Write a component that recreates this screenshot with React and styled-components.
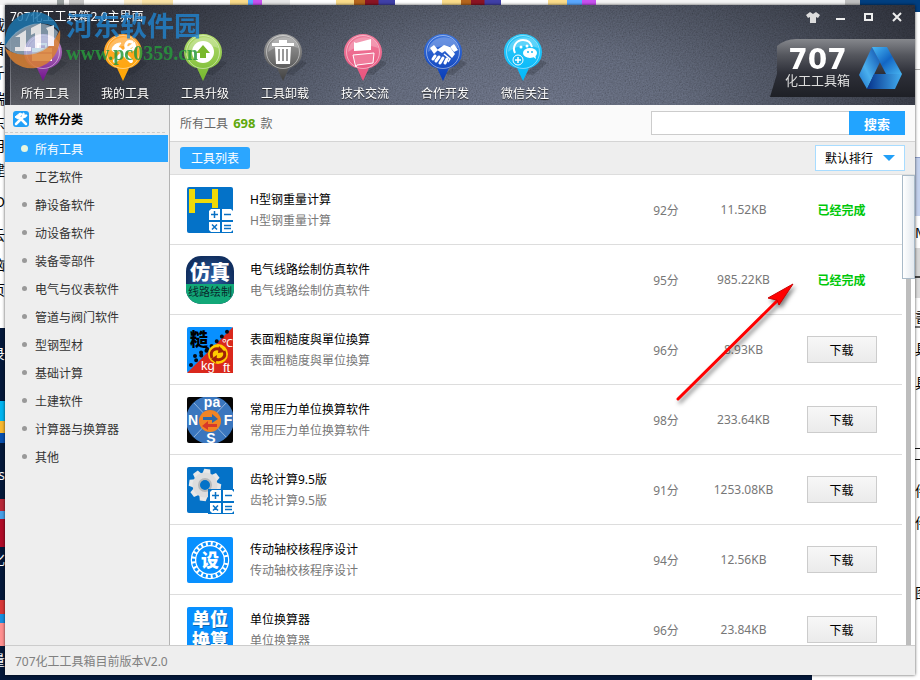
import React, { useState } from "react";
import styled, { createGlobalStyle } from "styled-components";

const GlobalStyle = createGlobalStyle`
  * { box-sizing: border-box; }
  body { margin: 0; }
  body, button, input, select {
    font-family: "Noto Sans", "Noto Sans CJK SC", sans-serif;
    font-size: 12px;
  }
  button { padding: 0; border: 0; background: none; cursor: pointer; }
  ul { margin: 0; padding: 0; list-style: none; }
`;

/* ---------- desktop behind the window ---------- */

const Desktop = styled.div`
  position: relative;
  display: grid;
  height: 100vh;
  padding: 5px;
  overflow: hidden;
  background:
    linear-gradient(90deg,
      #f4f4f4 0 57px, #9aa0a0 57px 64px, #f8f8f8 64px 69px, #c6c6c6 69px 84px, #fff 84px 124px,
      #fdeeca 124px 142px, #fbe3a6 142px 173px, #fff 173px 230px, #fbdc8a 230px 248px, #5aa8ff 248px 253px,
      #c850f0 253px 262px, #e6e6e6 262px 290px, #fff 290px 336px, #fbdc8a 336px 354px, #b5651d 354px 365px,
      #8c1424 365px 378px, #4040a8 379px 395px, #fff 395px 442px, #fbdc8a 442px 461px, #b5651d 461px 471px,
      #8c1424 471px 484px, #4040a8 485px 501px, #fff 501px 548px, #fbdc8a 548px 567px, #5aa8ff 567px 582px,
      #c850f0 582px 596px, #f4f4f4 596px 845px, #c0c0c0 845px 860px, #003f80 860px) 0 0 / 100% 5px no-repeat,
    linear-gradient(#fff 0 328px, #04183a 328px 401px, #00b4f0 401px 421px, #f8b830 421px 433px, #0850b0 433px 443px,
      #04183a 443px 499px, #b82838 499px 511px, #48a0e8 511px 519px, #b00c28 519px 547px, #04183a 547px 600px,
      #d83838 600px 614px, #1890e0 614px 623px, #ff9090 623px 646px, #04183a 646px) 0 0 / 5px 100% no-repeat,
    linear-gradient(#003f80 0 12px, #fff 12px 69px, #aaa 69px 70px, #fff 70px 157px, #8c9cc8 157px 158px, #c4d2ee 158px 216px,
      #fff 216px 248px, #d8d8d8 248px 276px, #444 276px 278px, #ddd 278px 298px, #fff 298px 326px,
      #777 326px 328px, #fff 328px 448px, #111 448px 449px, #fff 449px 459px, #111 459px 460px, #fff 460px) 100% 0 / 5px 100% no-repeat,
    linear-gradient(90deg, #04183a 0 812px, #fff 812px) 0 100% / 100% 5px no-repeat;
`;

const EdgeText = styled.span`
  position: absolute;
  top: ${(p) => p.$top}px;
  ${(p) => (p.$side === "left" ? "left: 0; justify-content: flex-end;" : "right: 0;")}
  display: flex;
  width: 5px;
  overflow: hidden;
  color: ${(p) => (p.$light ? "#fff" : "#000")};
  font-size: 14px;
  line-height: 18px;
`;

/* ---------- window ---------- */

const Window = styled.div`
  position: relative;
  display: flex;
  flex-direction: column;
  min-width: 0;
  min-height: 0;
  background: #eee;
  box-shadow: 0 0 3px rgba(0, 0, 0, 0.7);
`;

const Header = styled.header`
  position: relative;
  isolation: isolate;
  display: flex;
  justify-content: space-between;
  height: 100px;
  flex: none;
  color: #fff;
  background: radial-gradient(ellipse 52% 210% at 57% 110%, #5f6576 0%, #545a69 35%, #363a44 75%, #25272f 100%);
`;

const Grain = styled.svg`
  position: absolute;
  inset: 0;
  z-index: -1;
  width: 100%;
  height: 100%;
  opacity: 0.3;
  mix-blend-mode: overlay;
`;

const HeaderStart = styled.div`
  display: flex;
  flex-direction: column;
  justify-content: space-between;
`;

const WindowTitle = styled.h1`
  margin: 0;
  padding: 4px 0 0 5px;
  font-size: 12px;
  font-weight: 400;
  line-height: 16px;
`;

const MainNav = styled.nav`
  display: flex;
  gap: 10px;
  padding-left: 5px;
`;

const NavButton = styled.button`
  display: flex;
  flex-direction: column;
  align-items: center;
  gap: 2px;
  width: 70px;
  height: 80px;
  padding-top: 8px;
  border: solid transparent;
  border-width: 0 1px;
  color: #fff;
  line-height: 18px;
  text-shadow: 0 1px 1px #222;
  ${(p) =>
    p.$active &&
    `background: linear-gradient(rgba(255,255,255,0), rgba(255,255,255,.22));
     border-image: linear-gradient(transparent, #8a8c94) 1;
     border-width: 0 1px;`}
`;

const HeaderEnd = styled.div`
  display: flex;
  flex-direction: column;
  align-items: flex-end;
  justify-content: space-between;
  padding-bottom: 8px;
`;

const WindowControls = styled.div`
  display: flex;
  gap: 12px;
  padding: 4px 10px 0 0;
`;

const ControlButton = styled.button`
  display: grid;
  place-items: center;
  width: 16px;
  height: 16px;
  color: #eee;
`;

const Brand = styled.div`
  display: flex;
  align-items: center;
  gap: 8px;
  height: 58px;
  padding: 0 13px 0 15px;
  border-top-left-radius: 26px 22px;
  background: linear-gradient(#85878c 0, #55575e 16px, #2e3039 34px, #1e2026 58px);
  clip-path: polygon(7px 0, 100% 0, 100% 100%, 0 100%, 7px 60%);
`;

const BrandText = styled.div`
  text-align: center;
  font-size: 13px;
  line-height: 16px;
  color: #ddd;
`;

const BrandNumber = styled.strong`
  display: block;
  font: bold 28px/24px "DejaVu Sans", sans-serif;
  color: #fff;
`;

/* ---------- watermark over the header ---------- */

const Watermark = styled.div`
  position: absolute;
  top: 8px;
  left: 4px;
  display: flex;
  align-items: center;
  gap: 3px;
  pointer-events: none;
`;

const WatermarkName = styled.div`
  color: #2084d0;
  opacity: 0.8;
  font: bold 27px/28px "Noto Sans CJK SC", sans-serif;
`;

const WatermarkUrl = styled.div`
  color: #28983c;
  opacity: 0.85;
  font: bold 20px/28px "Liberation Serif", serif;
`;

/* ---------- body ---------- */

const Body = styled.div`
  display: flex;
  flex: 1;
  min-height: 0;
`;

const Sidebar = styled.aside`
  width: 165px;
  flex: none;
  border-right: 1px solid #b4b4b4;
  background: #eee;
`;

const SidebarTitle = styled.h2`
  display: flex;
  align-items: center;
  gap: 6px;
  height: 28px;
  margin: 0 4px 2px 0;
  padding-left: 8px;
  border-bottom: 1px dashed #ccc;
  font-size: 12px;
  color: #000;
`;

const CategoryButton = styled.button`
  display: flex;
  align-items: center;
  gap: 7px;
  width: 163px;
  height: 27px;
  margin-bottom: 1px;
  padding-left: 16px;
  color: ${(p) => (p.$active ? "#fff" : "#333")};
  background: ${(p) => (p.$active ? "#2ba6ff" : "transparent")};

  &::before {
    content: "";
    width: ${(p) => (p.$active ? 7 : 5)}px;
    height: ${(p) => (p.$active ? 7 : 5)}px;
    margin: 0 ${(p) => (p.$active ? 0 : 1)}px;
    border-radius: 50%;
    background: ${(p) => (p.$active ? "#e6f5df" : "#999")};
  }
`;

const Content = styled.main`
  display: flex;
  flex: 1;
  flex-direction: column;
  min-width: 0;
  background: #fff;
`;

const SearchBar = styled.div`
  display: flex;
  align-items: center;
  justify-content: space-between;
  flex: none;
  height: 37px;
  padding: 0 10px;
  border-bottom: 1px solid #d4d4d4;
  background: #fafafa;
  color: #666;
`;

const Count = styled.strong`
  margin: 0 2px;
  font-size: 13px;
  color: #60a80c;
`;

const SearchForm = styled.form`
  display: flex;
`;

const SearchInput = styled.input`
  width: 198px;
  height: 24px;
  padding: 0 6px;
  border: 1px solid #ccc;
  border-right: 0;
  background: #fff;
`;

const SearchButton = styled.button`
  width: 56px;
  height: 24px;
  background: #22a4ff;
  color: #fff;
  font-size: 13px;
  font-weight: 700;
`;

const ListToolbar = styled.div`
  display: flex;
  align-items: center;
  justify-content: space-between;
  flex: none;
  height: 33px;
  padding: 0 10px;
  border-bottom: 1px solid #ddd;
  background: #eee;
`;

const ListTab = styled.button`
  width: 70px;
  height: 22px;
  border-radius: 3px;
  background: #2ba6ff;
  color: #fff;
`;

const SortBox = styled.label`
  display: flex;
  align-items: center;
  width: 90px;
  height: 26px;
  padding: 0 9px;
  border: 1px solid #a8dcff;
  background: #fff;
`;

const SortSelect = styled.select`
  flex: 1;
  min-width: 0;
  padding: 0;
  border: 0;
  appearance: none;
  background: transparent;
  color: #000;
`;

const ListArea = styled.div`
  display: flex;
  flex: 1;
  min-height: 0;
`;

const ToolList = styled.ul`
  flex: 1;
  min-width: 0;
  overflow: hidden;
`;

const ToolRow = styled.li`
  display: grid;
  grid-template-columns: 46px minmax(0, 1fr) 80px 75px 121px;
  align-items: center;
  height: 70px;
  padding-left: 17px;
  border-bottom: 1px solid #ddd;
  color: #777;
  text-align: center;
`;

const ToolText = styled.div`
  padding-left: 17px;
  text-align: left;
  line-height: 21px;
`;

const ToolName = styled.div`
  color: #000;
`;

const Tile = styled.svg`
  display: block;
  width: 46px;
  height: 46px;
  overflow: visible;
`;

const TileCaption = styled.g`
  text-shadow: 1px 1px 0 #0868b4;
`;

const Done = styled.strong`
  color: #00c80a;
`;

const DownloadButton = styled.button`
  width: 70px;
  height: 27px;
  border: 1px solid #ccc;
  background: linear-gradient(#f7f7f7, #ebebeb);
  color: #000;
`;

const ScrollTrack = styled.div`
  display: flex;
  align-items: flex-start;
  width: 13px;
  flex: none;
  background: linear-gradient(#bdbdbd, #bdbdbd) 4px 0 / 5px 100% no-repeat #fff;
`;

const ScrollThumb = styled.div`
  width: 13px;
  height: 104px;
  border: 1px solid #a9bac8;
  background: linear-gradient(90deg, #fff, #e2e8ee);
`;

const StatusBar = styled.footer`
  display: flex;
  align-items: center;
  height: 30px;
  flex: none;
  padding: 0 10px;
  border-top: 1px solid #ccc;
  background: #eee;
  color: #808080;
`;

const ArrowOverlay = styled.svg`
  position: absolute;
  top: 275px;
  right: 115px;
  width: 130px;
  height: 130px;
  pointer-events: none;
  filter: drop-shadow(2px 3px 2px rgba(0, 0, 0, 0.5));
`;

/* ---------- drawings ---------- */

const pinGlyphs = {
  bag: (
    <g fill="#fff">
      <path d="M9 14h20v13H9z" />
      <path d="M15 14v-4h8v4" fill="none" stroke="#fff" strokeWidth="2" />
      <path d="M9 19h20" stroke="#8d4c9d" />
    </g>
  ),
  tools: (
    <g fill="none" stroke="#fff" strokeLinecap="round">
      <path d="M12 27 25 14" strokeWidth="4" />
      <path d="M29 8c-5-2-8 3-5 7 4 3 9 0 7-5l-4 3" strokeWidth="3" />
      <path d="m16 15 12 12" strokeWidth="4" />
      <path d="M9 16c0-4 4-7 9-7l-3 4 1 3-4 2z" fill="#fff" strokeWidth="1" />
    </g>
  ),
  up: (
    <g>
      <circle cx="20" cy="18" r="11" fill="#fff" />
      <path d="m20 11 7 8h-4v5h-6v-5h-4z" fill="#79b82c" />
    </g>
  ),
  trash: (
    <g fill="#fff">
      <path d="M9 9h7V6h8v3h7v3H9zM12 13h16l-1 17H13z" />
      <path d="M16 15v12M20 15v12M24 15v12" stroke="#777" strokeWidth="1.500" />
    </g>
  ),
  chat: (
    <g>
      <path d="m11 8 2 1 15-4v11l-17 1z" fill="#fff" />
      <path d="m10 21 21-2-1 10-16 2-1 2-1-3z" fill="#f07c9c" stroke="#fff" />
    </g>
  ),
  hands: (
    <g fill="#fff">
      <path d="m7 14 4-3 4 5-4 4zM27 13l4-3 4 6-4 2z" />
      <path d="m14 16 7-5 6 2 5 7-3 4-7-7-3 2z" />
      <path d="m12 22-2 3m6-2-3 4m7-3-3 5m7-4-2 4" stroke="#fff" strokeWidth="3" strokeLinecap="round" />
      <path d="m21 20 6 5-2 3" fill="none" stroke="#fff" strokeWidth="1.500" />
    </g>
  ),
  wechat: (
    <g>
      <path d="M12 19c-3-6 1-13 8-13 5 0 8 3 9 7" fill="none" stroke="#fff" strokeWidth="2" />
      <circle cx="18" cy="13" r="1.500" fill="#fff" />
      <circle cx="24" cy="12" r="1.500" fill="#fff" />
      <ellipse cx="27" cy="19" rx="7" ry="5" fill="#fff" />
      <path d="m29 22 4 3-1-5z" fill="#fff" />
      <circle cx="25" cy="18" r="1" fill="#18b9f2" />
      <circle cx="29" cy="18" r="1" fill="#18b9f2" />
      <circle cx="15" cy="26" r="5" fill="#18b9f2" stroke="#fff" />
      <path d="M12 26h6M15 23v6" stroke="#fff" strokeWidth="1.500" />
    </g>
  ),
};

function Pin({ id, dark, light, glyph }) {
  return (
    <svg width="44" height="50" viewBox="0 0 44 50" aria-hidden="true">
      <defs>
        <linearGradient id={`pin-${id}`} x1="0" y1="0" x2="0" y2="1">
          <stop offset="0" stopColor={light} />
          <stop offset="1" stopColor={dark} />
        </linearGradient>
      </defs>
      <path d="m22 41 16-14 6 3-14 12z" fill="#20222b" opacity=".25" />
      <path d="M20 1c10.500 0 19 8 19 18 0 9-6 15-13 16l-6 13-6-13C7 34 1 28 1 19 1 9 9.500 1 20 1z" fill={`url(#pin-${id})`} />
      <circle cx="20" cy="19" r="16.500" fill="none" stroke="#fff" strokeOpacity=".45" />
      <path d="M5 19C6 0 34 0 35 15 25 11 14 12 5 19z" fill="#fff" opacity=".25" />
      <g transform="translate(0 1)">{pinGlyphs[glyph]}</g>
    </svg>
  );
}

function BrandMark() {
  return (
    <svg width="44" height="44" viewBox="0 0 44 44" aria-hidden="true">
      <defs>
        <linearGradient id="bm-a" x1="1" y1="0" x2="0" y2="1">
          <stop offset="0" stopColor="#0a48a8" />
          <stop offset=".6" stopColor="#4ab0ee" />
          <stop offset="1" stopColor="#1a70c8" />
        </linearGradient>
        <linearGradient id="bm-b" x1="0" y1="0" x2="1" y2="1">
          <stop offset="0" stopColor="#49b8f4" />
          <stop offset=".5" stopColor="#1266c4" />
          <stop offset="1" stopColor="#48b4f0" />
        </linearGradient>
        <linearGradient id="bm-c">
          <stop offset="0" stopColor="#06338c" />
          <stop offset="1" stopColor="#43aef0" />
        </linearGradient>
      </defs>
      <path d="M14 1 22 16 9 43 1 29z" fill="url(#bm-a)" />
      <path d="M14 1h15l15 27H28z" fill="url(#bm-b)" />
      <path d="M16 28h28l-7 15H9z" fill="url(#bm-c)" />
    </svg>
  );
}

function WatermarkMark() {
  return (
    <svg width="59" height="62" viewBox="0 0 59 62" opacity=".85" aria-hidden="true">
      <path d="M1 38C-2 0 48-8 56 24 44 8 15 16 1 38z" fill="#1c75ad" />
      <path d="M1 40c16 13 44 6 55-18 4 44-46 50-55 18z" fill="#d98032" />
      <path d="M1 38c13-24 40-29 53-14-6 21-31 28-48 19z" fill="#a9c8dd" opacity=".75" />
      <path d="m11 29 11-7v17h5V20l10-5v25h-6V25l-4 2v16H11v-4h5V29zM42 20l8-3v21h-6V23z" fill="#fff" />
    </svg>
  );
}

const gearTeeth = [0, 45, 90, 135, 180, 225, 270, 315];

function Calculator() {
  return (
    <g>
      <rect x="20" y="21" width="26" height="25" fill="#0472c8" />
      <path d="M24 22h9v11H22v-9zM35 22h9l2 2v9H35zM22 35h11v10h-9l-2-2zM35 35h11v8l-2 2h-9z" fill="#fff" />
      <path
        d="M24 27.500h7M27.500 24v7M37 27.500h7M25 37.500l5 5m0-5-5 5M37 38.500h7M37 41.500h7"
        stroke="#0870c4"
        strokeWidth="1.500"
      />
    </g>
  );
}

const cjkBold = { fontFamily: '"Noto Sans CJK SC", sans-serif', fontWeight: 800 };
const latinBold = { fontFamily: '"Liberation Sans", sans-serif', fontWeight: 700 };

const tiles = {
  steel: (
    <>
      <rect width="46" height="46" rx="2" fill="#0472c8" />
      <path d="M2 2h6v10h17V2h6v19h-6v-5H8v10H2z" fill="#f0da08" />
      <Calculator />
    </>
  ),
  circuit: (
    <>
      <defs>
        <clipPath id="squircle"><rect x="-1" y="-1" width="48" height="48" rx="15" /></clipPath>
        <radialGradient id="navy"><stop stopColor="#2e64ac" /><stop offset="1" stopColor="#112f60" /></radialGradient>
      </defs>
      <g clipPath="url(#squircle)">
        <path d="M-1-1h48v48H-1z" fill="url(#navy)" />
        <path d="M-1 27h48v20H-1z" fill="#12a878" />
      </g>
      <text x="23" y="23" textAnchor="middle" fontSize="20" fill="#fff" {...cjkBold}>仿真</text>
      <text x="23" y="39" textAnchor="middle" fontSize="11" fill="#082a2c" fontFamily="Noto Sans CJK SC">线路绘制</text>
    </>
  ),
  rough: (
    <>
      <rect width="46" height="46" rx="2" fill="#0890ff" />
      <path d="M46 0v46H0z" fill="#da281c" />
      <path d="M4 38 43 2" stroke="#050a14" strokeWidth="4" strokeLinecap="round" strokeDasharray="0 7" />
      <path d="M8 29 22 21" stroke="#050a14" strokeWidth="4" strokeLinecap="round" strokeDasharray="0 7" />
      <text x="3" y="19" fontSize="18" fill="#000" {...cjkBold}>糙</text>
      <circle cx="31" cy="27" r="10" fill="#fc0" />
      <path d="M25 31c-3-8 4-11 9-8M37 24c3 7-4 10-9 8" fill="none" stroke="#a02008" strokeWidth="3" />
      <path d="m32 19 6 6-7 1zM30 28l-1 8-5-4z" fill="#a02008" />
      <g fill="#fff" fontFamily="Liberation Sans" fontSize="13">
        <text x="35" y="20" fontSize="11">℃</text>
        <text x="14" y="43">kg</text>
        <text x="36" y="45">ft</text>
      </g>
    </>
  ),
  pressure: (
    <>
      <defs>
        <clipPath id="dial"><rect width="46" height="46" rx="2" /></clipPath>
      </defs>
      <g clipPath="url(#dial)">
        <path d="M0 0h46v46H0z" fill="#050505" />
        <circle cx="23" cy="23" r="24" fill="#3a76be" />
        <path d="m7 6 32 34M39 6 7 40" stroke="#90b4dc" />
      </g>
      <circle cx="23" cy="24" r="11" fill="#f08424" />
      <path d="M16 20h9v-3l6 5-6 4v-3h-9z" fill="#2c68a8" />
      <path d="M30 27h-9v-3l-6 5 6 4v-3h9z" fill="#d83828" />
      <g fill="#fff" fontSize="14" textAnchor="middle" {...latinBold}>
        <text x="25" y="10">pa</text>
        <text x="6" y="28">N</text>
        <text x="41" y="28">F</text>
        <text x="24" y="46">S</text>
      </g>
    </>
  ),
  gear: (
    <>
      <rect width="46" height="46" rx="2" fill="#0472c8" />
      {gearTeeth.map((a) => (
        <path key={a} d="M15 2h6l2 9H13z" fill="#e8e8e8" transform={`rotate(${a + 8} 18 18)`} />
      ))}
      <circle cx="18" cy="18" r="9" fill="none" stroke="#ddd" strokeWidth="7" />
      <circle cx="18" cy="18" r="6" fill="none" stroke="#b5b8ba" strokeWidth="2" />
      <g transform="translate(1 1)"><Calculator /></g>
    </>
  ),
  shaft: (
    <>
      <rect width="46" height="46" rx="2" fill="#0890ff" />
      <circle cx="23" cy="23" r="16.500" fill="none" stroke="#fff" strokeWidth="5.500" />
      <circle cx="23" cy="23" r="16.500" fill="none" stroke="#0890ff" strokeWidth="3" strokeDasharray="3 2" />
      <text x="23" y="30" textAnchor="middle" fontSize="18" fill="#fff" {...cjkBold}>设</text>
    </>
  ),
  units: (
    <>
      <rect width="46" height="46" rx="2" fill="#0890ff" />
      <TileCaption fill="#fff" fontSize="18" textAnchor="middle" {...cjkBold}>
        <text x="23" y="19">单位</text>
        <text x="23" y="40">换算</text>
      </TileCaption>
    </>
  ),
};

/* ---------- data ---------- */

const navItems = [
  { label: "所有工具", glyph: "bag", light: "#c79bd0", dark: "#71108c" },
  { label: "我的工具", glyph: "tools", light: "#ffa535", dark: "#ffa800" },
  { label: "工具升级", glyph: "up", light: "#b4dc70", dark: "#74b82c" },
  { label: "工具卸载", glyph: "trash", light: "#a4a4a4", dark: "#404040" },
  { label: "技术交流", glyph: "chat", light: "#f07c9c", dark: "#e8527c" },
  { label: "合作开发", glyph: "hands", light: "#3c74dc", dark: "#083cb8" },
  { label: "微信关注", glyph: "wechat", light: "#30c8f8", dark: "#00b8fa" },
];

const categories = [
  "所有工具", "工艺软件", "静设备软件", "动设备软件", "装备零部件", "电气与仪表软件",
  "管道与阀门软件", "型钢型材", "基础计算", "土建软件", "计算器与换算器", "其他",
];

const tools = [
  { name: "H型钢重量计算", score: "92分", size: "11.52KB", tile: "steel", done: true },
  { name: "电气线路绘制仿真软件", score: "95分", size: "985.22KB", tile: "circuit", done: true },
  { name: "表面粗糙度與單位換算", score: "96分", size: "8.93KB", tile: "rough" },
  { name: "常用压力单位换算软件", score: "98分", size: "233.64KB", tile: "pressure" },
  { name: "齿轮计算9.5版", score: "91分", size: "1253.08KB", tile: "gear" },
  { name: "传动轴校核程序设计", score: "94分", size: "12.56KB", tile: "shaft" },
  { name: "单位换算器", score: "96分", size: "23.84KB", tile: "units" },
];

const edgeTexts = [
  ["left", 16, "载"], ["left", 40, "首"], ["left", 64, "斤"], ["left", 90, "端"], ["left", 114, "东"],
  ["left", 137, "用"], ["left", 161, "建"], ["left", 193, "D"], ["left", 226, "云"], ["left", 256, "脑"],
  ["left", 281, "页"], ["left", 345, "录", true], ["left", 466, "s", true], ["left", 550, "化", true],
  ["left", 651, "量", true],
  ["right", 224, "M"], ["right", 308, "書"], ["right", 340, "具"], ["right", 374, "具"],
  ["right", 482, "件"], ["right", 514, "件"], ["right", 584, "图"],
];

export default function App() {
  const [section, setSection] = useState(navItems[0].label);
  const [category, setCategory] = useState(categories[0]);

  return (
    <Desktop>
      <GlobalStyle />
      {edgeTexts.map(([side, top, text, light]) => (
        <EdgeText key={side + top} $side={side} $top={top} $light={light} aria-hidden="true">
          <span>{text}</span>
        </EdgeText>
      ))}
      <Window>
        <Header>
          <Grain aria-hidden="true">
            <filter id="grain">
              <feTurbulence type="fractalNoise" baseFrequency="0.7" numOctaves="2" />
              <feColorMatrix values="1 0 0 0 0  1 0 0 0 0  1 0 0 0 0  0 0 0 0 1" />
            </filter>
            <rect width="100%" height="100%" filter="url(#grain)" />
          </Grain>
          <HeaderStart>
            <WindowTitle>707化工工具箱2.0主界面</WindowTitle>
            <MainNav>
              {navItems.map((item) => (
                <NavButton key={item.label} $active={item.label === section} onClick={() => setSection(item.label)}>
                  <Pin id={item.glyph} {...item} />
                  {item.label}
                </NavButton>
              ))}
            </MainNav>
          </HeaderStart>
          <HeaderEnd>
            <WindowControls>
              <ControlButton aria-label="皮肤">
                <svg width="14" height="12" viewBox="0 0 14 12" fill="#ddd"><path d="m4 1 3 2 3-2 4 3-2 3-2-1v6H4V6L2 7 0 4z" /></svg>
              </ControlButton>
              <ControlButton aria-label="最小化">
                <svg width="10" height="10" viewBox="0 0 10 10" fill="currentColor"><path d="M0 6h9v2H0z" /></svg>
              </ControlButton>
              <ControlButton aria-label="最大化">
                <svg width="10" height="10" viewBox="0 0 10 10" fill="none" stroke="currentColor" strokeWidth="2"><path d="M1 2h7v6H1z" /></svg>
              </ControlButton>
              <ControlButton aria-label="关闭">
                <svg width="10" height="10" viewBox="0 0 10 10" stroke="currentColor" strokeWidth="2"><path d="m1 1 8 8M9 1 1 9" /></svg>
              </ControlButton>
            </WindowControls>
            <Brand>
              <BrandText>
                <BrandNumber>707</BrandNumber>
                化工工具箱
              </BrandText>
              <BrandMark />
            </Brand>
          </HeaderEnd>
        </Header>
        <Body>
          <Sidebar>
            <SidebarTitle>
              <svg width="16" height="16" viewBox="0 0 16 16" aria-hidden="true">
                <rect width="16" height="16" rx="3" fill="#22a0f8" />
                <path d="m3 13 8-8M6 6l7 7" stroke="#fff" strokeWidth="2.500" strokeLinecap="round" />
                <path d="M14 4c-1 4-6 3-5 0 0-1 1-2 2-2v2zM2 6l5-4 2 1-2 2v2L5 8z" stroke="#fff" fill="#fff" />
              </svg>
              软件分类
            </SidebarTitle>
            <ul>
              {categories.map((name) => (
                <li key={name}>
                  <CategoryButton $active={name === category} onClick={() => setCategory(name)}>{name}</CategoryButton>
                </li>
              ))}
            </ul>
          </Sidebar>
          <Content>
            <SearchBar>
              <span>所有工具 <Count>698</Count> 款</span>
              <SearchForm onSubmit={(e) => e.preventDefault()}>
                <SearchInput type="text" aria-label="搜索工具" />
                <SearchButton type="submit">搜索</SearchButton>
              </SearchForm>
            </SearchBar>
            <ListToolbar>
              <ListTab>工具列表</ListTab>
              <SortBox>
                <SortSelect aria-label="排行方式">
                  <option>默认排行</option>
                </SortSelect>
                <svg width="12" height="6" viewBox="0 0 12 6" aria-hidden="true"><path d="M0 0h12L6 6z" fill="#22a0f8" /></svg>
              </SortBox>
            </ListToolbar>
            <ListArea>
              <ToolList>
                {tools.map((tool) => (
                  <ToolRow key={tool.name}>
                    <Tile viewBox="0 0 46 46" aria-hidden="true">{tiles[tool.tile]}</Tile>
                    <ToolText>
                      <ToolName>{tool.name}</ToolName>
                      <div>{tool.name}</div>
                    </ToolText>
                    <span>{tool.score}</span>
                    <span>{tool.size}</span>
                    <span>{tool.done ? <Done>已经完成</Done> : <DownloadButton>下载</DownloadButton>}</span>
                  </ToolRow>
                ))}
              </ToolList>
              <ScrollTrack><ScrollThumb /></ScrollTrack>
            </ListArea>
          </Content>
        </Body>
        <StatusBar>707化工工具箱目前版本V2.0</StatusBar>
      </Window>
      <Watermark>
        <WatermarkMark />
        <div>
          <WatermarkName>河东软件园</WatermarkName>
          <WatermarkUrl>www.pc0359.cn</WatermarkUrl>
        </div>
      </Watermark>
      <ArrowOverlay viewBox="0 0 130 130" aria-hidden="true">
        <path d="M3 124 104 24" stroke="#f00" strokeWidth="3" strokeLinecap="round" />
        <path d="m118 9-14 21-2-5-5-1-4-1z" fill="#f00" stroke="#c00" strokeWidth="1" />
      </ArrowOverlay>
    </Desktop>
  );
}
